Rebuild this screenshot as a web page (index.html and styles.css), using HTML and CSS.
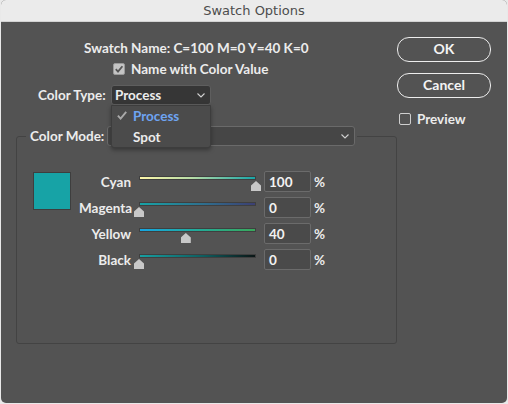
FILE: index.html
```html
<!DOCTYPE html>
<html>
<head>
<meta charset="utf-8">
<link rel="stylesheet" href="styles.css">
</head>
<body>
<div class="window">
  <div class="titlebar">Swatch Options</div>
  <div class="content">
    <div class="main">
      <div class="name-row">Swatch Name: C=100 M=0 Y=40 K=0</div>
      <div class="check-row">
        <span class="checkbox checked"><svg width="10" height="10" viewBox="0 0 10 10"><polyline points="1.8,5.2 4,7.6 8.4,2.2" fill="none" stroke="#555" stroke-width="1.8"/></svg></span>
        <span>Name with Color Value</span>
      </div>
      <div class="type-row">
        <span class="type-label">Color Type:</span>
        <div class="select type-select">
          <span>Process</span>
          <svg class="chev" width="8" height="5" viewBox="0 0 8 5"><polyline points="0.5,0.5 4,4 7.5,0.5" fill="none" stroke="#cfcfcf" stroke-width="1.1"/></svg>
          <div class="menu">
            <div class="menu-item active"><svg class="tick" width="10" height="9" viewBox="0 0 10 9"><polyline points="0.9,4.6 3.6,7.6 9.2,0.9" fill="none" stroke="#a9a9a9" stroke-width="1.9"/></svg>Process</div>
            <div class="menu-item">Spot</div>
          </div>
        </div>
      </div>
      <fieldset class="group">
        <legend class="legend">
          <span class="mode-label">Color Mode:</span>
          <div class="select mode-select">
            <span class="mode-mark"></span>
            <svg class="chev" width="8" height="5" viewBox="0 0 8 5"><polyline points="0.5,0.5 4,4 7.5,0.5" fill="none" stroke="#cfcfcf" stroke-width="1.1"/></svg>
          </div>
        </legend>
        <div class="group-body">
          <div class="swatch"></div>
          <div class="sliders">
            <div class="s-label">Cyan</div>
            <div class="s-track"><div class="bar cyan"></div><div class="thumb" style="left:100%"></div></div>
            <div class="s-input">100</div>
            <div class="s-pct">%</div>

            <div class="s-label">Magenta</div>
            <div class="s-track"><div class="bar magenta"></div><div class="thumb" style="left:0%"></div></div>
            <div class="s-input">0</div>
            <div class="s-pct">%</div>

            <div class="s-label">Yellow</div>
            <div class="s-track"><div class="bar yellow"></div><div class="thumb" style="left:40%"></div></div>
            <div class="s-input">40</div>
            <div class="s-pct">%</div>

            <div class="s-label">Black</div>
            <div class="s-track"><div class="bar black"></div><div class="thumb" style="left:0%"></div></div>
            <div class="s-input">0</div>
            <div class="s-pct">%</div>
          </div>
        </div>
      </fieldset>
    </div>
    <div class="side">
      <div class="btn">OK</div>
      <div class="btn cancel">Cancel</div>
      <div class="preview-row">
        <span class="checkbox empty"></span>
        <span>Preview</span>
      </div>
    </div>
  </div>
</div>
</body>
</html>
```

FILE: styles.css
```css
html, body {
  margin: 0;
  padding: 0;
  height: 100%;
}
body {
  background: #e9e9e9;
  font-family: "Lato", "Open Sans", sans-serif;
  font-size: 13.5px;
  font-weight: 700;
  color: #ececec;
  overflow: hidden;
}
.window {
  margin-left: 1px;
  width: 506px;
  height: 403px;
  background: #535353;
  border-radius: 5px;
  overflow: hidden;
  display: flex;
  flex-direction: column;
}
.titlebar {
  flex: none;
  height: 21px;
  line-height: 21px;
  background: #ebebeb;
  border-bottom: 1px solid #d2d2d2;
  color: #4d4d4d;
  font-family: "DejaVu Sans", sans-serif;
  font-weight: 400;
  font-size: 13px;
  text-align: center;
}
.content {
  flex: 1;
  display: flex;
  padding-left: 15px;
}
.main {
  width: 381px;
  display: flex;
  flex-direction: column;
}
.name-row {
  margin-top: 18px;
  line-height: 16px;
  padding-left: 68px;
  white-space: nowrap;
}
.check-row {
  margin-top: 5px;
  height: 16px;
  display: flex;
  align-items: center;
  padding-left: 97px;
  gap: 6px;
  white-space: nowrap;
}
.checkbox {
  width: 12px;
  height: 12px;
  box-sizing: border-box;
  border-radius: 2px;
  display: flex;
  align-items: center;
  justify-content: center;
  flex: none;
}
.checkbox.checked {
  background: #c4c4c4;
  border: 1px solid #9a9a9a;
}
.checkbox.empty {
  border: 1px solid #cfcfcf;
}
.type-row {
  margin-top: 8px;
  display: flex;
  align-items: center;
  padding-left: 22px;
  height: 20px;
}
.type-label {
  width: 73px;
}
.select {
  position: relative;
  height: 20px;
  box-sizing: border-box;
  border: 1px solid #6a6a6a;
  border-radius: 3px;
  display: flex;
  align-items: center;
  padding-left: 3px;
}
.select .chev {
  position: absolute;
  right: 5px;
  top: 7px;
}
.type-select {
  width: 100px;
  background: #363636;
  border-color: #5e5e5e;
}
.menu {
  position: absolute;
  left: -1px;
  top: 19px;
  width: 100px;
  height: 43px;
  box-sizing: border-box;
  background: #4b4b4b;
  border: 1px solid #3d3d3d;
  border-radius: 0 0 3px 3px;
  box-shadow: 0 2px 4px rgba(0,0,0,0.35);
  z-index: 5;
}
.menu-item {
  position: relative;
  height: 21px;
  line-height: 21px;
  padding-left: 21px;
  color: #ececec;
}
.menu-item.active {
  color: #6ea4f2;
}
.tick {
  position: absolute;
  left: 5px;
  top: 5px;
}
.group {
  margin: 21px 0 0 0;
  padding: 0;
  height: 218px;
  box-sizing: border-box;
  border: 1px solid #434343;
  border-radius: 3px;
  min-width: 0;
}
.legend {
  margin-left: 9px;
  padding: 0 2px;
  display: flex;
  align-items: center;
  height: 20px;
}
.mode-label {
  width: 77px;
  padding-left: 2px;
  white-space: nowrap;
}
.mode-select {
  width: 248px;
  background: #464646;
}
.mode-mark {
  width: 2px;
  height: 6px;
  background: #4f86d8;
  border-radius: 1px;
}
.group-body {
  display: flex;
  padding: 25px 0 0 16px;
}
.swatch {
  width: 38px;
  height: 38px;
  box-sizing: border-box;
  background: #17a3a6;
  border: 1px solid #3e3e3e;
  margin-top: 1px;
}
.sliders {
  margin-left: 8px;
  display: grid;
  grid-template-columns: 52px 117px 47px auto;
  grid-auto-rows: 26px;
  column-gap: 8px;
}
.s-label {
  text-align: right;
  line-height: 21px;
  padding-top: 1px;
  white-space: nowrap;
}
.s-track {
  position: relative;
}
.bar {
  margin-top: 5px;
  height: 2px;
  border: 1px solid #3f3f3f;
}
.bar.cyan { background: linear-gradient(90deg, #fdf6a9, #b7dca6 45%, #17a5a8); }
.bar.magenta { background: linear-gradient(90deg, #17a3a6, #2f6f8e 55%, #3c3f72); }
.bar.yellow { background: linear-gradient(90deg, #16a6e2, #22aa98 50%, #3aa85c); }
.bar.black { background: linear-gradient(90deg, #179fa1, #0e5d5f 55%, #0b1616); }
.thumb {
  position: absolute;
  top: 10px;
  width: 10px;
  height: 10px;
  margin-left: -5px;
  background: #c8c8c8;
  clip-path: polygon(50% 0, 100% 45%, 100% 100%, 0 100%, 0 45%);
}
.s-input {
  height: 21px;
  line-height: 21px;
  box-sizing: border-box;
  border: 1px solid #6b6b6b;
  border-radius: 2px;
  background: #4a4a4a;
  padding-left: 4px;
  color: #f2f2f2;
}
.s-pct {
  margin-left: -5px;
  line-height: 21px;
  padding-top: 1px;
}
.side {
  width: 94px;
  padding-top: 15px;
  display: flex;
  flex-direction: column;
}
.btn {
  height: 25px;
  box-sizing: border-box;
  border: 1.5px solid #ededed;
  border-radius: 12px;
  text-align: center;
  line-height: 22px;
  font-size: 14px;
  color: #f4f4f4;
}
.cancel {
  margin-top: 11px;
}
.preview-row {
  margin-top: 15px;
  margin-left: 2px;
  display: flex;
  align-items: center;
  gap: 6px;
  height: 12px;
  white-space: nowrap;
}
```
